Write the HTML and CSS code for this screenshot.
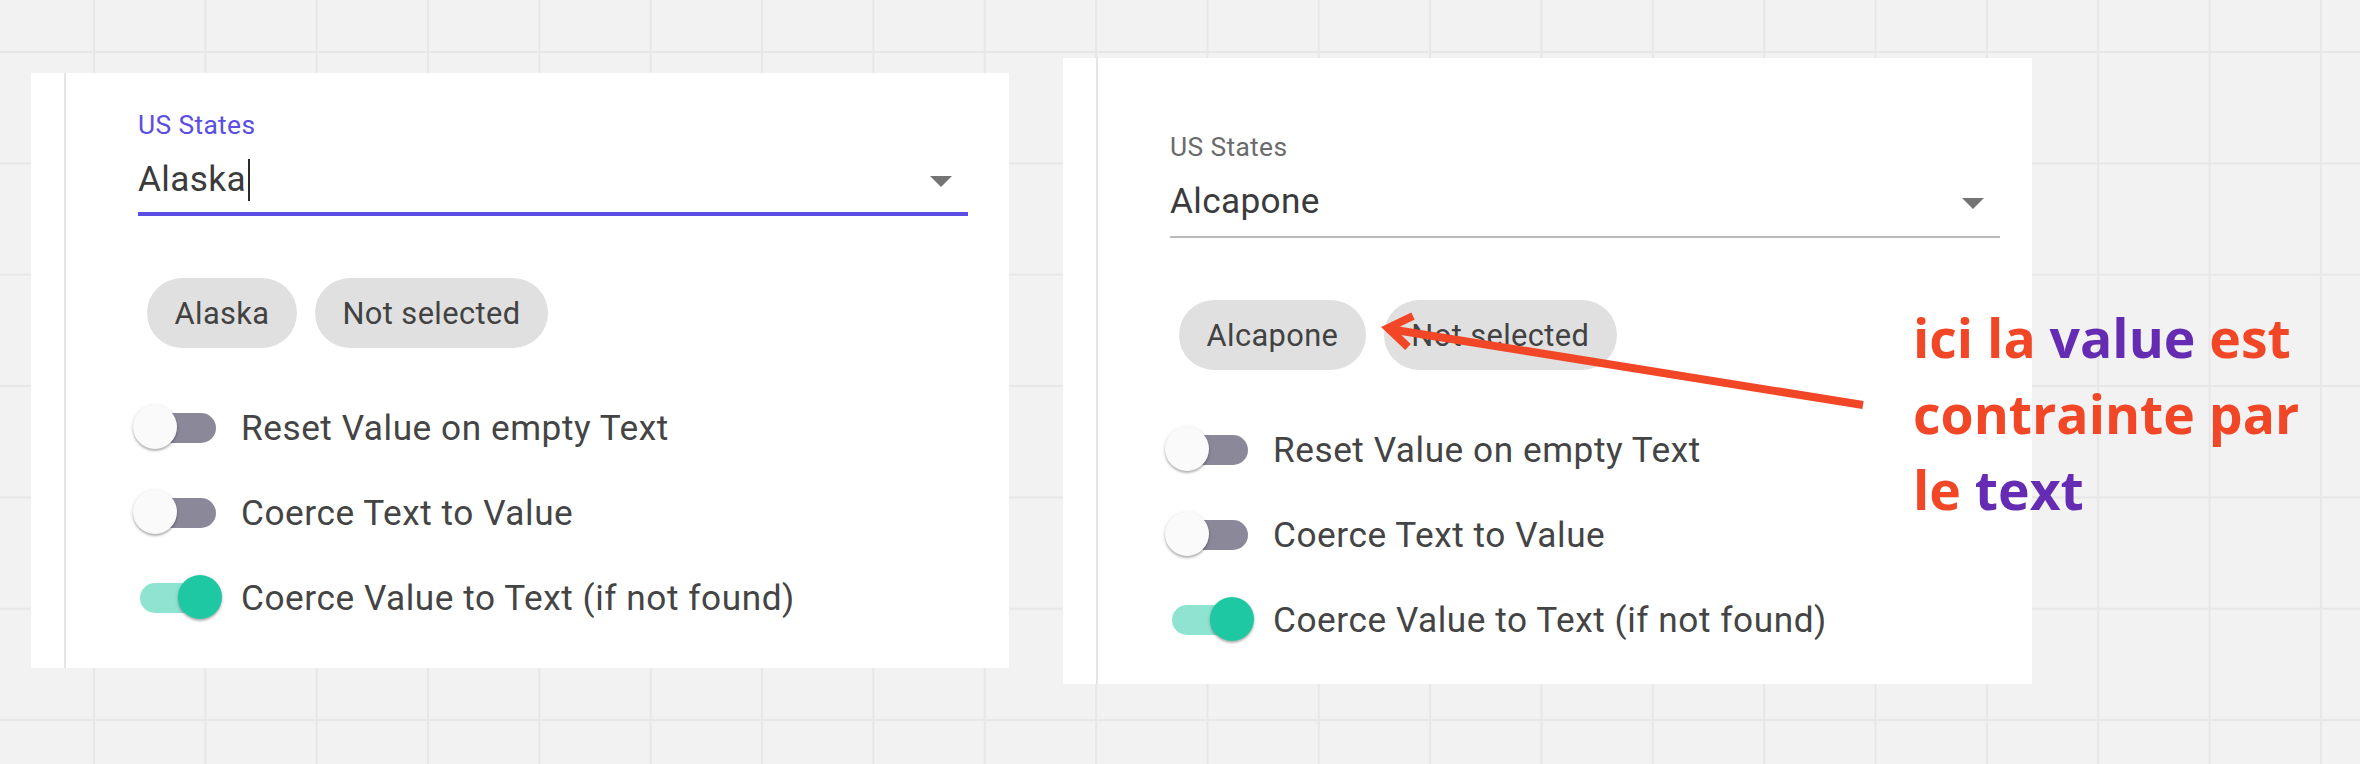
FILE: index.html
```html
<!DOCTYPE html>
<html lang="en">
<head>
<meta charset="utf-8">
<title>US States autocomplete</title>
<link rel="stylesheet" href="styles.css">
</head>
<body>
<main class="board">
  <section class="card card-a">
    <div class="card-edge"></div>
    <div class="card-body">
      <div class="field">
        <div class="field-label is-focused">US States</div>
        <div class="field-row is-focused">
          <span class="field-value">Alaska</span><span class="caret"></span>
          <svg class="drop" viewBox="0 0 22 11" width="22" height="11"><path d="M0 0H22L11 11Z"/></svg>
        </div>
      </div>
      <div class="chips">
        <span class="chip">Alaska</span>
        <span class="chip">Not selected</span>
      </div>
      <div class="toggles">
        <div class="toggle-row"><span class="switch"><span class="track"></span><span class="thumb"></span></span><span class="toggle-label">Reset Value on empty Text</span></div>
        <div class="toggle-row"><span class="switch"><span class="track"></span><span class="thumb"></span></span><span class="toggle-label">Coerce Text to Value</span></div>
        <div class="toggle-row"><span class="switch is-on"><span class="track"></span><span class="thumb"></span></span><span class="toggle-label">Coerce Value to Text (if not found)</span></div>
      </div>
    </div>
  </section>

  <section class="card card-b">
    <div class="card-edge"></div>
    <div class="card-body">
      <div class="field">
        <div class="field-label">US States</div>
        <div class="field-row">
          <span class="field-value">Alcapone</span>
          <svg class="drop" viewBox="0 0 22 11" width="22" height="11"><path d="M0 0H22L11 11Z"/></svg>
        </div>
      </div>
      <div class="chips">
        <span class="chip">Alcapone</span>
        <span class="chip">Not selected</span>
      </div>
      <div class="toggles">
        <div class="toggle-row"><span class="switch"><span class="track"></span><span class="thumb"></span></span><span class="toggle-label">Reset Value on empty Text</span></div>
        <div class="toggle-row"><span class="switch"><span class="track"></span><span class="thumb"></span></span><span class="toggle-label">Coerce Text to Value</span></div>
        <div class="toggle-row"><span class="switch is-on"><span class="track"></span><span class="thumb"></span></span><span class="toggle-label">Coerce Value to Text (if not found)</span></div>
      </div>
    </div>
  </section>

  <svg class="pointer" viewBox="0 0 520 120" width="520" height="120">
    <line x1="26" y1="31" x2="500" y2="107" class="pointer-line"/>
    <polyline points="50,18 25,30 45,49" class="pointer-head"/>
  </svg>

  <p class="note"><span class="red">ici la </span><span class="violet">value</span><span class="red"> est</span><br><span class="red">contrainte par</span><br><span class="red">le </span><span class="violet">text</span></p>
</main>
</body>
</html>
```

FILE: styles.css
```css
* { box-sizing: border-box; }

html, body {
  margin: 0;
  padding: 0;
}

body {
  width: 2360px;
  height: 764px;
  overflow: hidden;
  font-family: Roboto, "Liberation Sans", sans-serif;
}

.board {
  position: relative;
  width: 2360px;
  height: 764px;
  background-color: #f2f2f2;
  background-image:
    linear-gradient(to right, #e7e7e7 2px, transparent 2px),
    linear-gradient(to bottom, #e7e7e7 2px, transparent 2px);
  background-size: 111.35px 111.35px;
  background-position: 93px 51px;
  overflow: hidden;
}

/* pasted screenshots on the canvas */
.card {
  position: absolute;
  display: flex;
  background: #ffffff;
}

.card-a {
  left: 31px;
  top: 73px;
  width: 978px;
  height: 595px;
}

.card-b {
  left: 1063px;
  top: 58px;
  width: 969px;
  height: 626px;
}

.card-edge {
  width: 35px;
  flex: none;
  border-right: 2px solid #e5e5e5;
}

.card-body {
  flex: 1;
  padding-left: 72px;
}

.card-a .card-body { padding-top: 36px; }
.card-b .card-body { padding-top: 73px; }

/* text field */
.field {
  width: 830px;
}

.field-label {
  font-size: 26.4px;
  line-height: 32px;
  letter-spacing: 0.35px;
  color: #6b6b6b;
}

.field-label.is-focused {
  color: #5a4de3;
}

.field-row {
  display: flex;
  align-items: center;
  height: 59px;
  margin-top: 15.7px;
  padding-bottom: 13px;
  border-bottom: 2px solid #b9b9b9;
}

.field-row.is-focused {
  padding-bottom: 11px;
  border-bottom: 4px solid #5a4de3;
}

.field-value {
  font-size: 35.2px;
  line-height: 44px;
  letter-spacing: 0.35px;
  color: #3b3b3b;
}

.caret {
  width: 2px;
  height: 42px;
  margin-left: 2px;
  margin-top: 2px;
  background: #2b2b2b;
}

.drop {
  margin-left: auto;
  margin-right: 16px;
  margin-top: 5px;
  fill: #747474;
}

/* chips */
.chips {
  display: flex;
  gap: 18px;
  margin-top: 62.4px;
  padding-left: 9px;
}

.chip {
  display: inline-flex;
  align-items: center;
  height: 70.4px;
  padding: 0 27.5px;
  border-radius: 35.2px;
  background: #e0e0e0;
  font-size: 30.8px;
  letter-spacing: 0.4px;
  color: #424242;
}

/* switches */
.toggles {
  margin-top: 37px;
}

.toggle-row {
  display: flex;
  align-items: center;
  height: 85px;
}

.switch {
  position: relative;
  width: 90px;
  height: 46px;
  margin-left: -5px;
  flex: none;
}

.track {
  position: absolute;
  left: 8px;
  top: 7.6px;
  width: 75px;
  height: 30.8px;
  border-radius: 15.4px;
  background: #8b8899;
}

.thumb {
  position: absolute;
  left: 0;
  top: 0;
  width: 44px;
  height: 44px;
  border-radius: 50%;
  background: #fafafa;
  box-shadow: 0 2px 2px rgba(0, 0, 0, 0.22), 0 1px 4px rgba(0, 0, 0, 0.14);
}

.switch.is-on .track {
  left: 7px;
  background: #8fe3d1;
}

.switch.is-on .thumb {
  left: 45px;
  background: #1ec8a3;
}

.toggle-label {
  margin-left: 18px;
  font-size: 35.2px;
  line-height: 44px;
  letter-spacing: 0.55px;
  color: #444444;
}

/* annotation */
.pointer {
  position: absolute;
  left: 1363px;
  top: 298px;
}

.pointer-line {
  stroke: #f24726;
  stroke-width: 8;
  stroke-linecap: butt;
}

.pointer-head {
  fill: none;
  stroke: #f24726;
  stroke-width: 8;
  stroke-linejoin: miter;
  stroke-linecap: butt;
}

.note {
  position: absolute;
  left: 1913px;
  top: 300px;
  margin: 0;
  font-family: "Open Sans", "Liberation Sans", sans-serif;
  font-weight: 700;
  font-size: 53.5px;
  line-height: 76px;
  white-space: nowrap;
}

.red { color: #f24726; }
.violet { color: #652cb3; }
```
